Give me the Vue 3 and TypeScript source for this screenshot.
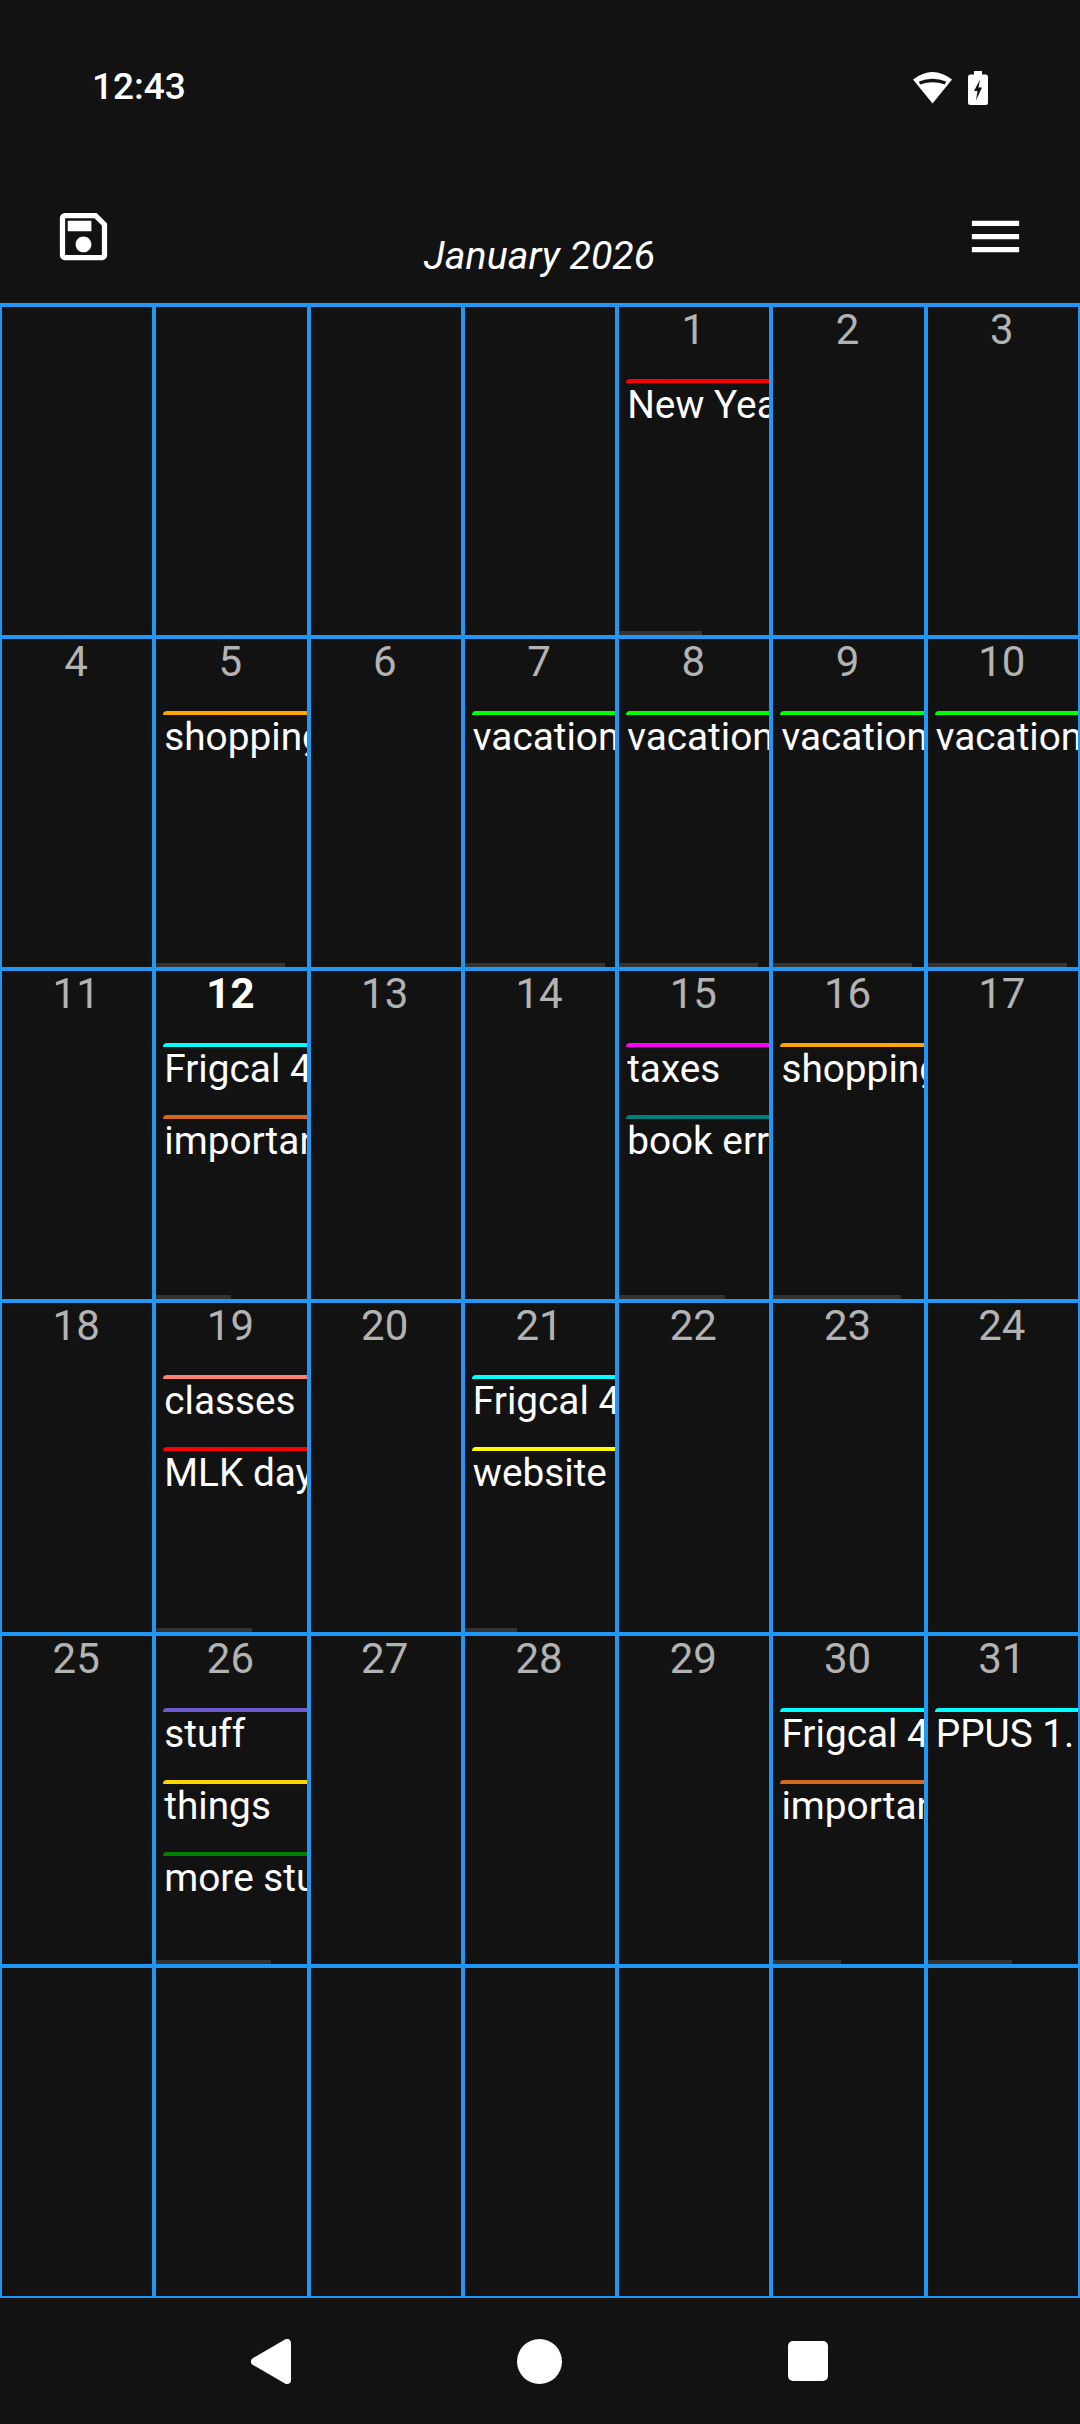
<script setup lang="ts">
interface CalEvent { title: string; color: string }
interface Cell { day?: number; today?: boolean; events: CalEvent[]; thumb?: number }

const data: Record<number, { events: [string, string][]; thumb?: number }> = {
  1: { events: [['New Year', '#ff0000']], thumb: 83 },
  5: { events: [['shopping', '#ffa500']], thumb: 129 },
  7: { events: [['vacation', '#00ff00']], thumb: 140 },
  8: { events: [['vacation', '#00ff00']], thumb: 139 },
  9: { events: [['vacation', '#00ff00']], thumb: 139 },
  10: { events: [['vacation', '#00ff00']], thumb: 139 },
  12: { events: [['Frigcal 4.0', '#00ffff'], ['important', '#d2691e']], thumb: 75 },
  15: { events: [['taxes', '#ff00ff'], ['book errands', '#008080']], thumb: 106 },
  16: { events: [['shopping', '#ffa500']], thumb: 128 },
  19: { events: [['classes', '#fa8072'], ['MLK day', '#ff0000']], thumb: 96 },
  21: { events: [['Frigcal 4.0', '#00ffff'], ['website', '#ffff00']], thumb: 52 },
  26: { events: [['stuff', '#6a5acd'], ['things', '#ffd700'], ['more stuff', '#008000']], thumb: 115 },
  30: { events: [['Frigcal 4.0', '#00ffff'], ['important', '#d2691e']], thumb: 68 },
  31: { events: [['PPUS 1.', '#00ffff']], thumb: 84 },
}

const cells: Cell[] = []
for (let i = 0; i < 42; i++) {
  const day = i - 3
  if (day < 1 || day > 31) {
    cells.push({ events: [] })
    continue
  }
  const d = data[day]
  cells.push({
    day,
    today: day === 12,
    thumb: d?.thumb,
    events: (d?.events ?? []).map(([title, color]) => ({ title, color })),
  })
}
</script>

<template>
  <div class="page">
    <div class="status">
      <span class="time">12:43</span>
      <div class="status-icons">
        <svg class="wifi" width="39" height="32" viewBox="0 0 39 32">
          <path d="M0 7.5Q19.5 -7.5 39 7.5L19.5 31.5Z" fill="#fff" />
          <path d="M6.5 11Q19.5 6 32.5 11" fill="none" stroke="#121212" stroke-width="3.4" />
        </svg>
        <svg class="battery" width="20" height="34" viewBox="0 0 20 34">
          <path d="M6 0h8v3.500h3.500a2.500 2.500 0 0 1 2.500 2.500v25.500a2.500 2.500 0 0 1-2.500 2.500h-15a2.500 2.500 0 0 1-2.500-2.500v-25.500a2.500 2.500 0 0 1 2.500-2.500h3.500z" fill="#fff" />
          <path d="M12 8.500L6 20h3.500L8 29.500L14 16.500H10.500Z" fill="#121212" />
        </svg>
      </div>
    </div>

    <header class="bar">
      <svg class="icon" viewBox="0 0 24 24" fill="#fff">
        <path d="M17 3H5c-1.110 0-2 .9-2 2v14c0 1.100.89 2 2 2h14c1.100 0 2-.9 2-2V7l-4-4zm2 16H5V5h11.170L19 7.830V19zm-7-7c-1.660 0-3 1.340-3 3s1.340 3 3 3 3-1.340 3-3-1.340-3-3-3zM6 6h9v4H6z" />
      </svg>
      <div class="title">January 2026</div>
      <svg class="icon" viewBox="0 0 24 24" fill="#fff">
        <path d="M3 18h18v-2H3v2zm0-5h18v-2H3v2zm0-7v2h18V6H3z" />
      </svg>
    </header>

    <main class="grid">
      <div v-for="(c, i) in cells" :key="i" class="cell">
        <div class="day" :class="{ today: c.today }">{{ c.day }}</div>
        <div v-for="e in c.events" :key="e.title" class="event" :style="{ borderTopColor: e.color }">{{ e.title }}</div>
        <div v-if="c.thumb" class="thumb" :style="{ width: c.thumb + 'px' }"></div>
      </div>
    </main>

    <nav class="nav">
      <svg width="40" height="45" viewBox="0 0 40 45">
        <polygon points="4,22.500 36,4 36,41" fill="#fff" stroke="#fff" stroke-width="8" stroke-linejoin="round" />
      </svg>
      <div class="home"></div>
      <div class="recent"></div>
    </nav>
  </div>
</template>

<style>
html, body { margin: 0; background: #121212; }
</style>

<style scoped>
.page {
  width: 1080px;
  height: 2424px;
  display: flex;
  flex-direction: column;
  background: #121212;
  color: #fff;
  font-family: Roboto, "Liberation Sans", sans-serif;
  overflow: hidden;
}
.status {
  height: 174px;
  flex: none;
  box-sizing: border-box;
  padding: 65px 92px 0 92px;
  display: flex;
  justify-content: space-between;
  align-items: flex-start;
}
.time { font-size: 37px; font-weight: 500; }
.status-icons { display: flex; gap: 16px; margin-top: 6px; align-items: flex-start; }
.wifi { margin-top: 1px; }
.bar {
  height: 131px;
  flex: none;
  box-sizing: border-box;
  padding: 31px 53px 0 52px;
  display: flex;
  align-items: flex-start;
  border-bottom: 2px solid #2196f3;
}
.icon { width: 63px; height: 63px; flex: none; }
.title {
  flex: 1;
  text-align: center;
  font-style: italic;
  font-size: 39.375px;
  margin-top: 27px;
}
.grid {
  flex: 1;
  min-height: 0;
  display: grid;
  grid-template-columns: repeat(7, minmax(0, 1fr));
  grid-template-rows: repeat(6, minmax(0, 1fr));
}
.cell {
  position: relative;
  border: 2px solid #2196f3;
  overflow: hidden;
  min-width: 0;
}
.day {
  height: 72px;
  line-height: 45px;
  font-size: 42px;
  text-align: center;
  color: #b3b3b3;
  padding-right: 2px;
}
.today { color: #fff; font-weight: 700; }
.event {
  margin: 0 0 25px 7px;
  padding-left: 1px;
  border-top: 4px solid;
  border-top-left-radius: 4px;
  font-size: 38.750px;
  line-height: 43px;
  white-space: nowrap;
  overflow: hidden;
  color: #fff;
}
.thumb {
  position: absolute;
  left: 0;
  bottom: 0;
  height: 4px;
  background: #333;
}
.nav {
  height: 126px;
  flex: none;
  display: flex;
  align-items: center;
  justify-content: center;
  gap: 226px;
  padding-right: 2px;
}
.home { width: 45px; height: 45px; border-radius: 50%; background: #fff; }
.recent { width: 40px; height: 40px; border-radius: 5px; background: #fff; }
</style>
